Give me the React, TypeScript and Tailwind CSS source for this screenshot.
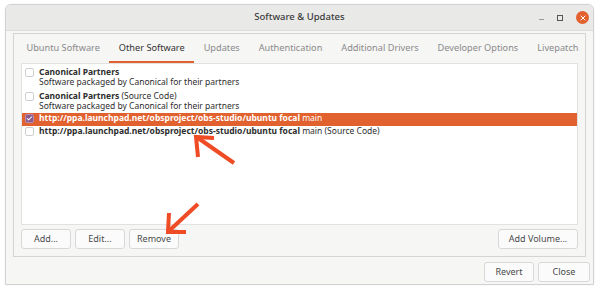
import { Check, X } from "lucide-react";

const font = { fontFamily: '"Noto Sans", "Open Sans", sans-serif' };

const tabs = [
  "Ubuntu Software",
  "Other Software",
  "Updates",
  "Authentication",
  "Additional Drivers",
  "Developer Options",
  "Livepatch",
];

type Item = {
  title: string;
  suffix?: string;
  sub?: string;
  checked?: boolean;
  selected?: boolean;
};

const items: Item[] = [
  { title: "Canonical Partners", sub: "Software packaged by Canonical for their partners" },
  {
    title: "Canonical Partners",
    suffix: " (Source Code)",
    sub: "Software packaged by Canonical for their partners",
  },
  {
    title: "http://ppa.launchpad.net/obsproject/obs-studio/ubuntu focal",
    suffix: " main",
    checked: true,
    selected: true,
  },
  {
    title: "http://ppa.launchpad.net/obsproject/obs-studio/ubuntu focal",
    suffix: " main (Source Code)",
  },
];

function Button({ label, className }: { label: string; className?: string }) {
  return (
    <button
      className={
        "flex h-[20px] items-center justify-center rounded-[3px] border border-[#d8d8d8] bg-[#fbfbfb] text-[9px] text-[#4a4a4a] " +
        (className ?? "")
      }
    >
      {label}
    </button>
  );
}

function Row({ item }: { item: Item }) {
  return (
    <div
      className={
        "flex items-start gap-[5px] pl-[3px] " +
        (item.sub ? "py-[2px] " : "h-[13px] items-center ") +
        (item.selected ? "bg-[#e1612f] text-white" : "text-[#2e2e2e]")
      }
    >
      <div
        className={
          "mt-[1px] flex h-[9px] w-[9px] shrink-0 items-center justify-center rounded-[2px] border " +
          (item.selected
            ? "border-[#b58bb1] bg-[#8b5a8c]"
            : "border-[#cfcfcf] bg-white")
        }
      >
        {item.checked && <Check size={7} strokeWidth={3.5} color="#fff" />}
      </div>
      <div className="flex flex-col whitespace-nowrap text-[8.5px] leading-[10px]">
        <span>
          <span className="font-bold">{item.title}</span>
          {item.suffix}
        </span>
        {item.sub && <span>{item.sub}</span>}
      </div>
    </div>
  );
}

export default function App() {
  return (
    <div className="relative h-[290px] w-[600px] bg-white" style={font}>
      <div className="ml-[5px] mt-[4px] flex h-[281px] w-[589px] flex-col overflow-hidden rounded-t-[6px] border border-[#d2d2d2] bg-[#f6f6f5] shadow-[0_0_2px_rgba(0,0,0,0.08)]">
        {/* title bar */}
        <div className="flex h-[26px] shrink-0 items-center border-b border-[#dcdcdc] bg-[#e9e9e8]">
          <div className="w-[70px]" />
          <div className="flex-1 text-center text-[9.5px] font-medium text-[#3a3a3a]">
            Software &amp; Updates
          </div>
          <div className="flex w-[70px] items-center justify-end gap-[13px] pr-[4px]">
            <div className="mt-[3px] h-px w-[5px] bg-[#9a9a9a]" />
            <div className="h-[6px] w-[6px] border border-[#555]" />
            <div className="flex h-[13px] w-[13px] items-center justify-center rounded-full bg-[#e3602f]">
              <X size={8} strokeWidth={3} color="#fff" />
            </div>
          </div>
        </div>

        {/* body */}
        <div className="flex flex-1 flex-col px-[7px] pt-[2px]">
          <div className="flex h-[224px] flex-col border border-[#d4d4d4] bg-[#f6f6f5]">
            <div className="flex h-[29px] shrink-0 items-stretch overflow-hidden pl-[3px]">
              {tabs.map((t) => {
                const active = t === "Other Software";
                return (
                  <div
                    key={t}
                    className={
                      "flex shrink-0 items-center whitespace-nowrap border-b-2 px-[9.5px] text-[9.2px] " +
                      (active
                        ? "border-[#e3602f] text-[#333]"
                        : "border-transparent text-[#8a8a8a]")
                    }
                  >
                    {t}
                  </div>
                );
              })}
            </div>
            <div className="flex flex-1 flex-col px-[7px]">
              <div className="flex h-[162px] flex-col border border-[#e2e2e2] bg-white pt-[1px]">
                {items.map((it, i) => (
                  <Row key={i} item={it} />
                ))}
              </div>
              <div className="mt-[4px] flex items-center gap-[4px]">
                <Button label="Add..." className="w-[50px]" />
                <Button label="Edit..." className="w-[50px]" />
                <Button label="Remove" className="w-[50px]" />
                <div className="flex-1" />
                <Button label="Add Volume..." className="w-[80px]" />
              </div>
            </div>
          </div>
          <div className="mt-[5px] flex justify-end gap-[4px]">
            <Button label="Revert" className="w-[50px]" />
            <Button label="Close" className="-mr-[4px] w-[52px]" />
          </div>
        </div>
      </div>

      {/* annotation arrows */}
      <svg
        className="pointer-events-none absolute left-0 top-0"
        width="600"
        height="290"
        viewBox="0 0 600 290"
      >
        <g stroke="#ef4b25" strokeWidth="4" fill="none" strokeLinecap="butt" strokeLinejoin="miter">
          <path d="M234 159 L198 134" />
          <path d="M214 134 L196 133 L198 153" />
          <path d="M198 200 L170 226" />
          <path d="M169 209 L168 228 L186 228" />
        </g>
      </svg>
    </div>
  );
}
